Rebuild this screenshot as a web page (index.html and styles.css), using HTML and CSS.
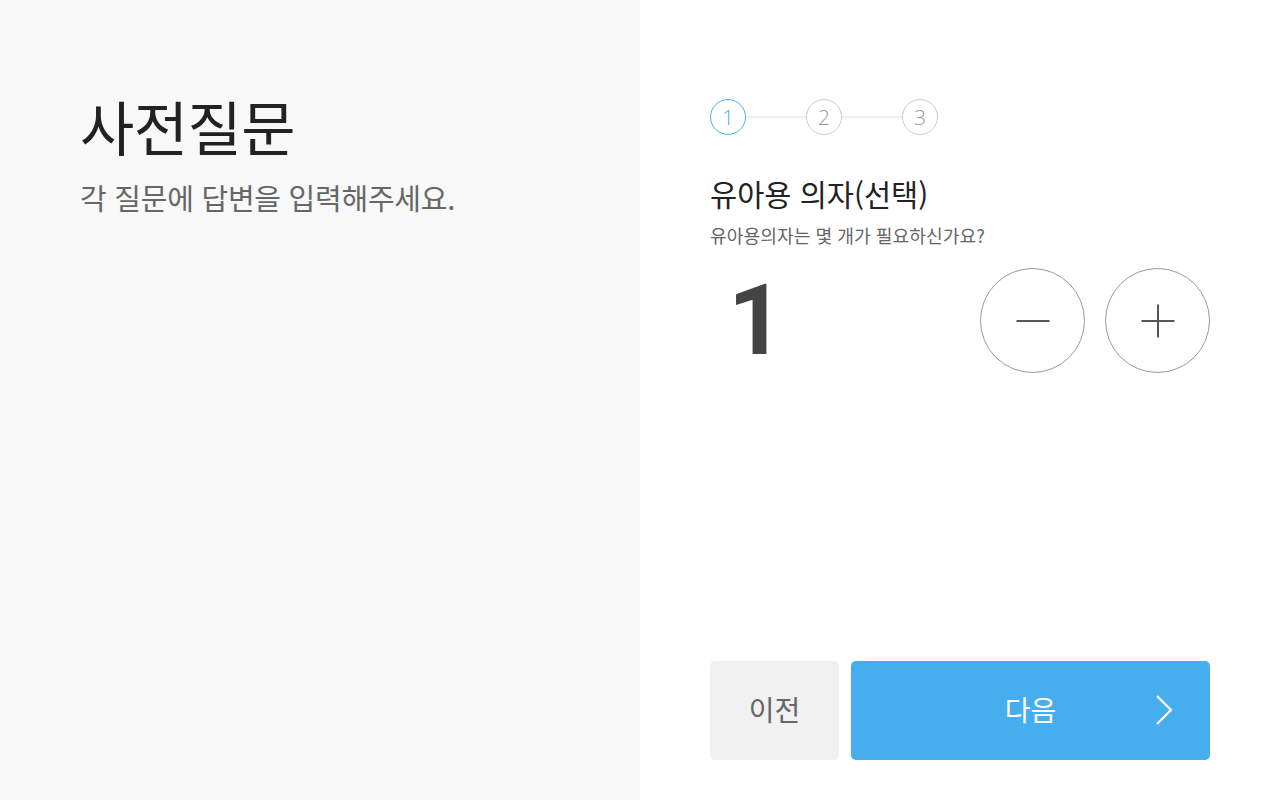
FILE: index.html
```html
<!DOCTYPE html>
<html lang="ko">
<head>
<meta charset="utf-8">
<title>사전질문</title>
<link rel="stylesheet" href="styles.css">
</head>
<body>
<div class="page">
  <section class="intro">
    <h1 class="intro-title">사전질문</h1>
    <p class="intro-sub">각 질문에 답변을 입력해주세요.</p>
  </section>
  <section class="form">
    <div class="steps">
      <span class="step active">1</span>
      <span class="step-line"></span>
      <span class="step">2</span>
      <span class="step-line"></span>
      <span class="step">3</span>
    </div>
    <h2 class="q-title">유아용 의자(선택)</h2>
    <p class="q-desc">유아용의자는 몇 개가 필요하신가요?</p>
    <div class="counter">
      <span class="count">1</span>
      <div class="counter-btns">
        <button class="round-btn" aria-label="감소">
          <svg width="34" height="34" viewBox="0 0 34 34"><path d="M0.5 17H33.5" stroke="#555" stroke-width="2" fill="none"/></svg>
        </button>
        <button class="round-btn" aria-label="증가">
          <svg width="34" height="34" viewBox="0 0 34 34"><path d="M0.5 17H33.5M17 0.5V33.5" stroke="#555" stroke-width="2" fill="none"/></svg>
        </button>
      </div>
    </div>
    <div class="actions">
      <button class="btn-prev">이전</button>
      <button class="btn-next"><span>다음</span>
        <svg class="chev" width="20" height="30" viewBox="0 0 20 30"><path d="M2 1L16 15L2 29" stroke="#fff" stroke-width="2.2" fill="none"/></svg>
      </button>
    </div>
  </section>
</div>
</body>
</html>
```

FILE: styles.css
```css
* { box-sizing: border-box; }
html, body { margin: 0; padding: 0; }
body {
  font-family: "Noto Sans CJK KR", "Noto Sans", sans-serif;
  width: 1280px;
  height: 800px;
  overflow: hidden;
}
.page {
  display: flex;
  height: 800px;
}
.intro {
  width: 640px;
  background: #f7f8f7;
  padding: 86px 80px 0 80px;
}
.intro-title {
  margin: 0;
  font-size: 59px;
  line-height: 80px;
  font-weight: 400;
  color: #222;
  letter-spacing: -0.5px;
}
.intro-sub {
  margin: 11px 0 0 0;
  font-size: 29px;
  line-height: 40px;
  font-weight: 400;
  color: #666;
  letter-spacing: -0.25px;
}
.form {
  flex: 1;
  background: #fff;
  padding: 99px 70px 40px 70px;
  display: flex;
  flex-direction: column;
}
.steps {
  display: flex;
  align-items: center;
}
.step {
  width: 36px;
  height: 36px;
  border-radius: 50%;
  border: 1px solid #ccc;
  color: #999;
  font-size: 21px;
  font-weight: 300;
  display: flex;
  align-items: center;
  justify-content: center;
  line-height: 1;
  font-family: "Open Sans", "Noto Sans", sans-serif;
}
.step.active {
  border-color: #47aeee;
  color: #47aeee;
}
.step-line {
  width: 60px;
  height: 2px;
  background: #eee;
}
.q-title {
  margin: 38px 0 0 0;
  font-size: 29.5px;
  line-height: 40px;
  font-weight: 400;
  color: #222;
  letter-spacing: 0;
}
.q-desc {
  margin: 10px 0 0 0;
  font-size: 18.2px;
  line-height: 24px;
  color: #666;
  letter-spacing: 0;
}
.counter {
  margin-top: 21px;
  display: flex;
  justify-content: space-between;
  align-items: center;
}
.count {
  padding-left: 18px;
  font-family: Roboto, "Noto Sans", sans-serif;
  font-size: 98px;
  font-weight: 700;
  color: #444;
  line-height: 105px;
}
.counter-btns {
  display: flex;
  gap: 20px;
}
.round-btn {
  width: 105px;
  height: 105px;
  border-radius: 50%;
  border: 1px solid #999;
  background: #fff;
  display: flex;
  align-items: center;
  justify-content: center;
  padding: 0;
}
.actions {
  margin-top: auto;
  display: flex;
  gap: 12px;
  height: 99px;
}
.btn-prev {
  width: 129px;
  border: none;
  border-radius: 5px;
  background: #f1f1f1;
  color: #666;
  font-family: inherit;
  font-size: 28px;
  padding: 0 0 4px 0;
}
.btn-next {
  flex: 1;
  border: none;
  border-radius: 5px;
  background: #47aeee;
  color: #fff;
  font-family: inherit;
  font-size: 28px;
  position: relative;
  display: flex;
  align-items: center;
  justify-content: center;
  padding: 0 0 4px 0;
}
.chev {
  position: absolute;
  right: 35px;
  top: 34px;
}
```
